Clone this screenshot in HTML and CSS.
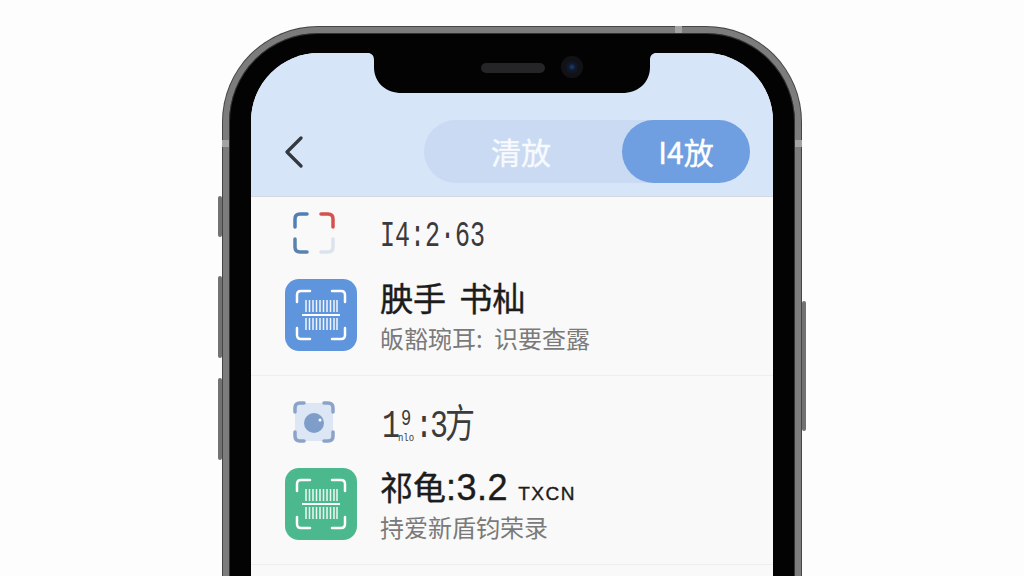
FILE: index.html
```html
<!DOCTYPE html>
<html lang="zh-CN">
<head>
    <meta charset="UTF-8">
    <meta name="viewport" content="width=device-width, initial-scale=1.0">
    <title>扫码记录</title>
    <link rel="stylesheet" href="styles.css">
</head>
<body>

    <svg class="defs" width="0" height="0" aria-hidden="true">
        <symbol id="barcode" viewBox="0 0 72 72">
            <path class="scan-frame" d="M12 23V16Q12 12 16 12H25M47 12H56Q60 12 60 16V23M12 49V56Q12 60 16 60H25M47 60H56Q60 60 60 56V49"/>
            <path class="scan-line" d="M17 36H55"/>
            <path class="scan-bars" d="M21 21V33M24.5 21V33M28 21V33M31.5 21V33M35 21V33M38.5 21V33M42 21V33M45.5 21V33M49 21V33M52 21V33M21 39V51M24.5 39V51M28 39V51M31.5 39V51M35 39V51M38.5 39V51M42 39V51M45.5 39V51M49 39V51M52 39V51"/>
        </symbol>
    </svg>

    <div class="phone">
        <span class="side-btn btn-mute"></span>
        <span class="side-btn btn-vol-up"></span>
        <span class="side-btn btn-vol-down"></span>
        <span class="side-btn btn-power"></span>
        <span class="band band-top"></span>
        <span class="band band-left"></span>
        <span class="band band-right"></span>

        <div class="screen">
            <div class="notch">
                <svg class="notch-shape" width="288" height="40" viewBox="0 0 288 40">
                    <path d="M0 0C3 0 6 2 6 7V14C6 30 18 40 34 40H254C270 40 282 30 282 14V7C282 2 285 0 288 0Z"/>
                </svg>
                <span class="speaker"></span>
                <span class="camera"></span>
            </div>

            <header class="top-bar">
                <svg class="back" width="20" height="32" viewBox="0 0 20 32">
                    <path d="M17 2L3 16L17 30"/>
                </svg>
                <div class="segments">
                    <span class="segment">清放</span>
                    <span class="segment active">I4放</span>
                </div>
            </header>

            <section class="record first">
                <div class="record-head">
                    <svg class="mini-icon" width="42" height="42" viewBox="0 0 42 42">
                        <path class="tl" d="M2 15V7Q2 2 7 2H14"/>
                        <path class="tr" d="M28 2H35Q40 2 40 7V15"/>
                        <path class="bl" d="M2 27V35Q2 40 7 40H14"/>
                        <path class="br" d="M28 40H35Q40 40 40 35V27"/>
                    </svg>
                    <span class="time">I4:2·63</span>
                </div>
                <div class="record-body">
                    <svg class="app-icon blue" width="72" height="72"><use href="#barcode"/></svg>
                    <div>
                        <div class="title">胦手 书杣</div>
                        <div class="sub">皈豁琬耳: 识要查露</div>
                    </div>
                </div>
            </section>

            <section class="record">
                <div class="record-head">
                    <svg class="mini-icon" width="42" height="42" viewBox="0 0 42 42">
                        <rect x="2" y="2" width="38" height="38" rx="5" fill="#dce6f5"/>
                        <path class="soft" d="M2 11V7Q2 2 7 2H11M31 2H35Q40 2 40 7V11M2 31V35Q2 40 7 40H11M31 40H35Q40 40 40 35V31"/>
                        <circle cx="21" cy="22" r="10" fill="#7f9dc9"/>
                        <circle cx="27" cy="19" r="1.5" fill="#fff"/>
                    </svg>
                    <span class="time wide">1<span class="stack">9<small>nlo</small></span>:3方</span>
                </div>
                <div class="record-body">
                    <svg class="app-icon green" width="72" height="72"><use href="#barcode"/></svg>
                    <div>
                        <div class="title">祁龟<span class="num">:3.2</span> <small>TXCN</small></div>
                        <div class="sub">持爱新盾钧荣录</div>
                    </div>
                </div>
            </section>
        </div>
    </div>

</body>
</html>
```

FILE: styles.css
```css
/* Page */
html, body {
    height: 100%;
}

body {
    margin: 0;
    padding-top: 27px;
    box-sizing: border-box;
    background-color: #fdfdfd;
    display: flex;
    justify-content: center;
    overflow: hidden;
    font-family: "Noto Sans CJK SC", "Noto Sans", sans-serif;
}

.defs {
    position: absolute;
}

/* Phone body */
.phone {
    position: relative;
    flex: none;
    width: 578px;
    height: 720px;
    box-sizing: border-box;
    padding: 20px 22px;
    background-color: #030303;
    border: 6px solid #7c7c7c;
    border-radius: 95px;
    box-shadow: 0 0 0 1px #454545, inset 0 0 0 1px #333333;
}

.side-btn {
    position: absolute;
    width: 4px;
    background-color: #727272;
    border-radius: 2px;
}

.btn-mute { left: -11px; top: 163px; height: 41px; }
.btn-vol-up { left: -11px; top: 243px; height: 82px; }
.btn-vol-down { left: -11px; top: 345px; height: 82px; }
.btn-power { right: -11px; top: 268px; height: 130px; }

.band {
    position: absolute;
    background-color: #a3a3a3;
}

.band-top { left: 446px; top: -7px; width: 7px; height: 7px; }
.band-left { left: -7px; top: 107px; width: 7px; height: 7px; }
.band-right { right: -7px; top: 107px; width: 7px; height: 7px; }

/* Screen */
.screen {
    position: relative;
    height: 100%;
    background-color: #f9f9f9;
    border-radius: 68px;
    overflow: hidden;
}

.notch {
    position: absolute;
    top: 0;
    left: 117px;
    width: 288px;
    height: 40px;
}

.notch-shape {
    display: block;
    fill: #030303;
}

.speaker {
    position: absolute;
    left: 113px;
    top: 10px;
    width: 64px;
    height: 10px;
    background-color: #252527;
    border-radius: 5px;
}

.camera {
    position: absolute;
    left: 193px;
    top: 3px;
    width: 22px;
    height: 22px;
    background: radial-gradient(circle, #1f3f7a 0, #0f1a30 22%, #121216 45%);
    border-radius: 50%;
}

/* Top bar */
.top-bar {
    height: 144px;
    box-sizing: border-box;
    padding: 0 23px 13px 33px;
    background-color: #d7e5f9;
    border-bottom: 1px solid #d5d9df;
    display: flex;
    justify-content: space-between;
    align-items: flex-end;
}

.back {
    margin-bottom: 15px;
    fill: none;
    stroke: #33373e;
    stroke-width: 3.2;
    stroke-linecap: round;
    stroke-linejoin: round;
}

.segments {
    width: 326px;
    height: 63px;
    background-color: #c9daf2;
    border-radius: 32px;
    display: flex;
    justify-content: space-between;
    align-items: center;
}

.segment {
    flex: 1;
    padding-right: 4px;
    color: #f7fafe;
    font-size: 30px;
    line-height: 63px;
    text-align: center;
    -webkit-text-stroke: 0.4px currentColor;
}

.segment.active {
    flex: none;
    width: 128px;
    padding-right: 0;
    background-color: #6f9fe0;
    border-radius: 32px;
    color: #fff;
}

/* Records */
.record {
    padding: 25px 0 24px 34px;
    border-bottom: 1px solid #eeeeee;
}

.record.first {
    padding-top: 15px;
}

.record-head {
    display: flex;
    align-items: center;
    gap: 45px;
    padding-left: 8px;
    margin-bottom: 25px;
}

.mini-icon {
    flex: none;
    fill: none;
    stroke-width: 3.5;
    stroke-linecap: round;
}

.tl { stroke: #4f7fb3; }
.tr { stroke: #d5514d; }
.bl { stroke: #5a82ad; }
.br { stroke: #dde3ee; }
.soft { stroke: #8ba3c9; }

.time {
    display: inline-block;
    margin-top: 6px;
    color: #3b3b3b;
    font-family: "Liberation Mono", "Noto Sans CJK SC", monospace;
    font-size: 25px;
    transform: scaleY(1.45);
}

.time.wide {
    margin: -4px 0 0 2px;
    font-size: 30px;
    letter-spacing: -3px;
    transform: scaleY(1.3);
}

.stack {
    display: inline-flex;
    flex-direction: column;
    align-items: center;
    vertical-align: middle;
    width: 18px;
    font-size: 17px;
    line-height: 19px;
    letter-spacing: 0;
}

.stack small {
    font-size: 9px;
    line-height: 11px;
}

.record-body {
    height: 72px;
    display: flex;
    align-items: flex-start;
    gap: 23px;
}

.app-icon {
    flex: none;
    border-radius: 14px;
}

.app-icon.blue { background-color: #5f95dc; }
.app-icon.green { background-color: #4cb88d; }

.scan-frame, .scan-line, .scan-bars {
    fill: none;
    stroke: #fff;
}

.scan-frame {
    stroke-width: 2.5;
    stroke-linecap: round;
}

.scan-line { stroke-width: 2; }

.scan-bars {
    stroke-width: 1.5;
    opacity: 0.9;
}

.title {
    color: #1c1c1c;
    font-family: "Liberation Sans", "Noto Sans CJK SC", sans-serif;
    font-size: 33px;
    line-height: 42px;
    word-spacing: 4px;
    -webkit-text-stroke: 0.4px currentColor;
}

.title .num {
    font-size: 36px;
    line-height: 1;
    letter-spacing: 0.5px;
}

.title small {
    margin-left: -3px;
    font-size: 19px;
    line-height: 1;
    letter-spacing: 1.5px;
}

.sub {
    color: #7a7a7a;
    font-size: 24px;
    line-height: 34px;
    word-spacing: 6px;
}
```
